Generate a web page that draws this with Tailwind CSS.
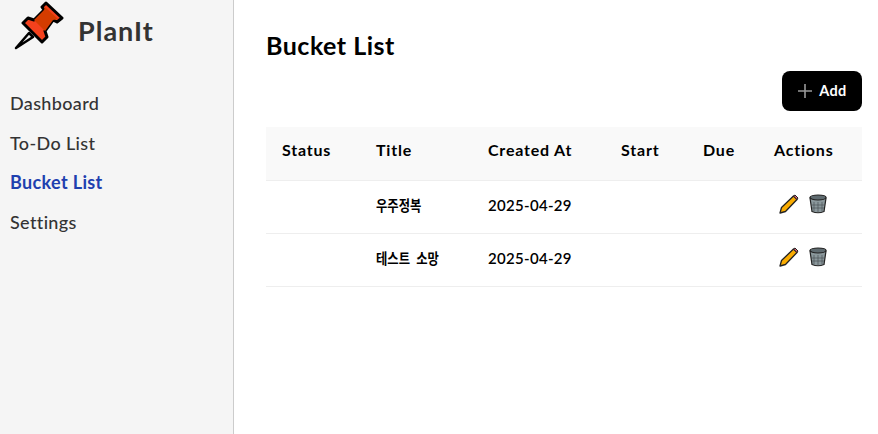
<!DOCTYPE html>
<html lang="en">

<head>
    <meta charset="UTF-8">
    <meta name="viewport" content="width=device-width, initial-scale=1.0">
    <title>PlanIt</title>
    <script src="https://cdn.jsdelivr.net/npm/@tailwindcss/browser@4"></script>
</head>

<body class="h-[434px] overflow-hidden bg-white font-['Lato','Noto_Sans_CJK_KR',sans-serif]">
    <div class="flex h-full">
        <!-- Sidebar -->
        <aside class="w-[234px] shrink-0 border-r border-[#cccccc] bg-[#f5f5f5] px-[10px]">
            <div class="flex h-[56px] items-start gap-[14px] pl-[4px]">
                <svg class="mt-[1px] h-[50px] w-[50px]" viewBox="0 0 50 50">
                    <path d="M2 47 L15 32 L19 36 Z" fill="#eee" stroke="#000" stroke-width="2.5" stroke-linejoin="round" />
                    <path d="M32 2 L48 17 L43 21 L39 19 L31 30 L33 36 L28 41 L9 22 L14 17 L20 19 L30 9 L28 6 Z" fill="#f4411d" stroke="#000" stroke-width="3" stroke-linejoin="round" />
                    <path d="M31 6 L44 18 L39 19 L31 30 L20 19 L30 9 Z" fill="#d43c00" />
                </svg>
                <span class="mt-[17px] text-[27px] leading-[28px] font-bold tracking-[1px] text-[#333333]">PlanIt</span>
            </div>
            <nav class="mt-[37px] flex flex-col gap-[18.5px] text-[18px] leading-[21px] font-medium tracking-[0.35px] text-[#333333]">
                <a>Dashboard</a>
                <a>To-Do List</a>
                <a class="font-bold text-[#1e40af]">Bucket List</a>
                <a>Settings</a>
            </nav>
        </aside>

        <!-- Main -->
        <main class="flex-1 pt-[31px] pr-[16px] pl-[32px]">
            <h1 class="text-[25px] leading-[29px] font-bold tracking-[0.5px] text-black">Bucket List</h1>
            <div class="mt-[11px] flex justify-end">
                <button class="flex h-[40px] w-[80px] items-center justify-center gap-[6px] rounded-[8px] bg-black text-[14.5px] font-bold tracking-[0.3px] text-white">
                    <svg class="h-[16px] w-[16px]" viewBox="0 0 16 16" fill="none" stroke="#999" stroke-width="1.6">
                        <path d="M8 1V15M1 8H15" />
                    </svg>
                    Add
                </button>
            </div>
            <table class="mt-[16px] w-full table-fixed border-collapse text-left text-[15px] tracking-[0.3px] text-black">
                <thead>
                    <tr class="h-[53px] border-b border-[#eeeeee] bg-[#f9f9f9] text-[16px] font-bold tracking-[0.8px]">
                        <th class="w-[94px] pb-[6px] pl-[16px]">Status</th>
                        <th class="w-[112px] pb-[6px] pl-[16px]">Title</th>
                        <th class="w-[133px] pb-[6px] pl-[16px]">Created At</th>
                        <th class="w-[82px] pb-[6px] pl-[16px]">Start</th>
                        <th class="w-[71px] pb-[6px] pl-[16px]">Due</th>
                        <th class="pb-[6px] pl-[16px]">Actions</th>
                    </tr>
                </thead>
                <tbody class="font-semibold">
                    <tr class="h-[53px] border-b border-[#eeeeee]">
                        <td></td>
                        <td class="pb-[3px] pl-[16px]"><span class="inline-block origin-left scale-x-[0.82] whitespace-nowrap tracking-normal [word-spacing:4px]">우주정복</span></td>
                        <td class="pb-[3px] pl-[16px]">2025-04-29</td>
                        <td></td>
                        <td></td>
                        <td class="pb-[6px] pl-[21px]">
                            <div class="flex items-center gap-[10px]">
                                <svg class="h-[20px] w-[20px]" viewBox="0 0 20 20">
                                    <path d="M1 19 L2.5 13.5 L14.5 2 L18 5.5 L6.5 17.5 Z" fill="#f9ab00" stroke="#222" stroke-width="1.3" stroke-linejoin="round" />
                                    <path d="M14.5 2 L16 1 L19 4 L18 5.5 Z" fill="#e8697a" stroke="#222" stroke-width="1" />
                                </svg>
                                <svg class="h-[20px] w-[18px]" viewBox="0 0 18 20">
                                    <path d="M1 4 L3 17.5 Q9 20 15 17.5 L17 4 Z" fill="#8a979b" stroke="#222" stroke-width="1.2" />
                                    <ellipse cx="9" cy="3.5" rx="8" ry="2.5" fill="#5f6b70" stroke="#222" stroke-width="1.2" />
                                    <path d="M5 8V17M9 8V18M13 8V17M3 11H15M3 14H15" stroke="#4a5458" stroke-width=".7" />
                                </svg>
                            </div>
                        </td>
                    </tr>
                    <tr class="h-[53px] border-b border-[#eeeeee]">
                        <td></td>
                        <td class="pb-[3px] pl-[16px]"><span class="inline-block origin-left scale-x-[0.82] whitespace-nowrap tracking-normal [word-spacing:4px]">테스트 소망</span></td>
                        <td class="pb-[3px] pl-[16px]">2025-04-29</td>
                        <td></td>
                        <td></td>
                        <td class="pb-[6px] pl-[21px]">
                            <div class="flex items-center gap-[10px]">
                                <svg class="h-[20px] w-[20px]" viewBox="0 0 20 20">
                                    <path d="M1 19 L2.5 13.5 L14.5 2 L18 5.5 L6.5 17.5 Z" fill="#f9ab00" stroke="#222" stroke-width="1.3" stroke-linejoin="round" />
                                    <path d="M14.5 2 L16 1 L19 4 L18 5.5 Z" fill="#e8697a" stroke="#222" stroke-width="1" />
                                </svg>
                                <svg class="h-[20px] w-[18px]" viewBox="0 0 18 20">
                                    <path d="M1 4 L3 17.5 Q9 20 15 17.5 L17 4 Z" fill="#8a979b" stroke="#222" stroke-width="1.2" />
                                    <ellipse cx="9" cy="3.5" rx="8" ry="2.5" fill="#5f6b70" stroke="#222" stroke-width="1.2" />
                                    <path d="M5 8V17M9 8V18M13 8V17M3 11H15M3 14H15" stroke="#4a5458" stroke-width=".7" />
                                </svg>
                            </div>
                        </td>
                    </tr>
                </tbody>
            </table>
        </main>
    </div>
</body>

</html>
